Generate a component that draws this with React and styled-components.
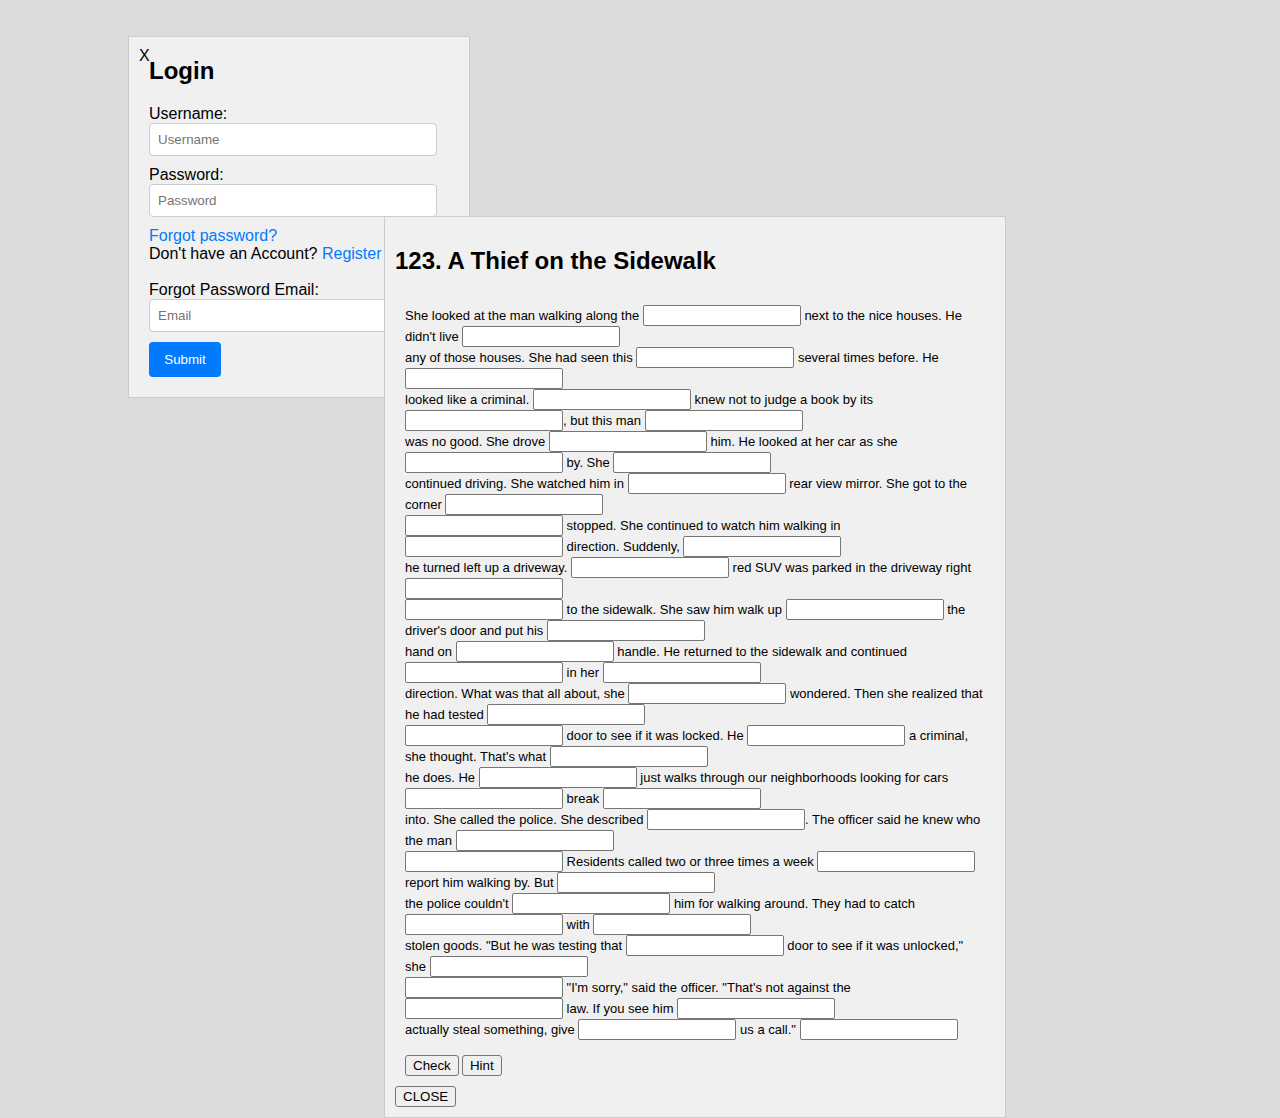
import React from "react";
import styled, { createGlobalStyle } from "styled-components";

const GlobalStyle = createGlobalStyle`
  * {
    box-sizing: border-box;
  }
  html, body {
    margin: 0;
    padding: 0;
    height: 100%;
    background: #dcdbd9;
    font-family: "Liberation Sans", Arial, sans-serif;
    color: #000;
  }
`;

const Desktop = styled.div`
  position: relative;
  width: 1280px;
  height: 1118px;
  overflow: hidden;
`;

/* the two floating windows */
const LoginWindow = styled.div`
  position: absolute;
  left: 128px;
  top: 36px;
  width: 342px;
  height: 362px;
  padding: 20px;
  background: #f0f0f0;
  border: 1px solid #cccccc;
`;

const StoryWindow = styled.div`
  position: absolute;
  left: 384px;
  top: 216px;
  width: 622px;
  height: 902px;
  padding: 10px;
  background: #f0f0f0;
  border: 1px solid #cccccc;
`;

const CloseX = styled.span`
  position: absolute;
  left: 10px;
  top: 10px;
  font-size: 16px;
  line-height: 18px;
`;

const LoginTitle = styled.h2`
  margin: 0 0 20px;
  font-size: 24px;
  line-height: 28px;
  font-weight: bold;
`;

const Field = styled.div`
  display: flex;
  flex-direction: column;
  margin-bottom: 10px;
`;

const FieldLabel = styled.label`
  font-size: 16px;
  line-height: 18px;
`;

const TextInput = styled.input`
  width: 288px;
  height: 33px;
  padding: 0 8px;
  background: #fff;
  border: 1px solid #cccccc;
  border-radius: 4px;
  font-family: inherit;
  font-size: 13.33px;
  &::placeholder {
    color: #757575;
  }
`;

const LinkLine = styled.div`
  font-size: 16px;
  line-height: 18px;
`;

const BlueLink = styled.a`
  color: #007bff;
  text-decoration: none;
`;

const ForgotForm = styled.div`
  margin-top: 18px;
`;

const SubmitButton = styled.button`
  display: block;
  width: 72px;
  height: 35px;
  background: #007bff;
  color: #fff;
  border: none;
  border-radius: 4px;
  font-family: inherit;
  font-size: 13.33px;
`;

const StoryTitle = styled.h2`
  margin: 20px 0 30px;
  font-size: 24px;
  line-height: 28px;
  font-weight: bold;
`;

const StoryForm = styled.div`
  padding: 0 10px;
  font-size: 13px;
  line-height: 21px;
`;

const Blank = styled.input`
  width: 158px;
  height: 21px;
  padding: 1px 2px;
  margin: 0;
  background: #fff;
  border: 1px solid #767676;
  border-radius: 2px;
  font-size: 13px;
  vertical-align: baseline;
`;

const ButtonRow = styled.div`
  display: flex;
  gap: 3px;
  margin-top: 15px;
`;

const PlainButton = styled.button`
  min-width: 40px;
  height: 21px;
  padding: 0 7px;
  background: #efefef;
  border: 1px solid #767676;
  border-radius: 3px;
  color: #000;
  font-family: inherit;
  font-size: 13.33px;
`;

const CloseButton = styled(PlainButton)`
  display: block;
  margin-top: 10px;
`;

const storyLines = [
  "She looked at the man walking along the _ next to the nice houses. He didn't live _",
  "any of those houses. She had seen this _ several times before. He _",
  "looked like a criminal. _ knew not to judge a book by its _, but this man _",
  "was no good. She drove _ him. He looked at her car as she _ by. She _",
  "continued driving. She watched him in _ rear view mirror. She got to the corner _",
  "_ stopped. She continued to watch him walking in _ direction. Suddenly, _",
  "he turned left up a driveway. _ red SUV was parked in the driveway right _",
  "_ to the sidewalk. She saw him walk up _ the driver's door and put his _",
  "hand on _ handle. He returned to the sidewalk and continued _ in her _",
  "direction. What was that all about, she _ wondered. Then she realized that he had tested _",
  "_ door to see if it was locked. He _ a criminal, she thought. That's what _",
  "he does. He _ just walks through our neighborhoods looking for cars _ break _",
  "into. She called the police. She described _. The officer said he knew who the man _",
  "_ Residents called two or three times a week _ report him walking by. But _",
  "the police couldn't _ him for walking around. They had to catch _ with _",
  "stolen goods. \"But he was testing that _ door to see if it was unlocked,\" she _",
  "_ \"I'm sorry,\" said the officer. \"That's not against the _ law. If you see him _",
  "actually steal something, give _ us a call.\" _",
];

const StoryLine = ({ text }) => {
  const parts = text.split("_");
  return (
    <>
      {parts.map((part, i) => (
        <React.Fragment key={i}>
          {part}
          {i < parts.length - 1 && <Blank type="text" />}
        </React.Fragment>
      ))}
      <br />
    </>
  );
};

const App = () => {
  return (
    <>
      <GlobalStyle />
      <Desktop>
        <LoginWindow>
          <CloseX>X</CloseX>
          <LoginTitle>Login</LoginTitle>
          <Field>
            <FieldLabel>Username:</FieldLabel>
            <TextInput placeholder="Username" />
          </Field>
          <Field>
            <FieldLabel>Password:</FieldLabel>
            <TextInput placeholder="Password" />
          </Field>
          <LinkLine>
            <BlueLink href="#">Forgot password?</BlueLink>
          </LinkLine>
          <LinkLine>
            Don't have an Account? <BlueLink href="#">Register</BlueLink>
          </LinkLine>
          <ForgotForm>
            <Field>
              <FieldLabel>Forgot Password Email:</FieldLabel>
              <TextInput placeholder="Email" />
            </Field>
            <SubmitButton>Submit</SubmitButton>
          </ForgotForm>
        </LoginWindow>
        <StoryWindow>
          <StoryTitle>123. A Thief on the Sidewalk</StoryTitle>
          <StoryForm>
            {storyLines.map((line, i) => (
              <StoryLine key={i} text={line} />
            ))}
            <ButtonRow>
              <PlainButton>Check</PlainButton>
              <PlainButton>Hint</PlainButton>
            </ButtonRow>
          </StoryForm>
          <CloseButton>CLOSE</CloseButton>
        </StoryWindow>
      </Desktop>
    </>
  );
};

export default App;
